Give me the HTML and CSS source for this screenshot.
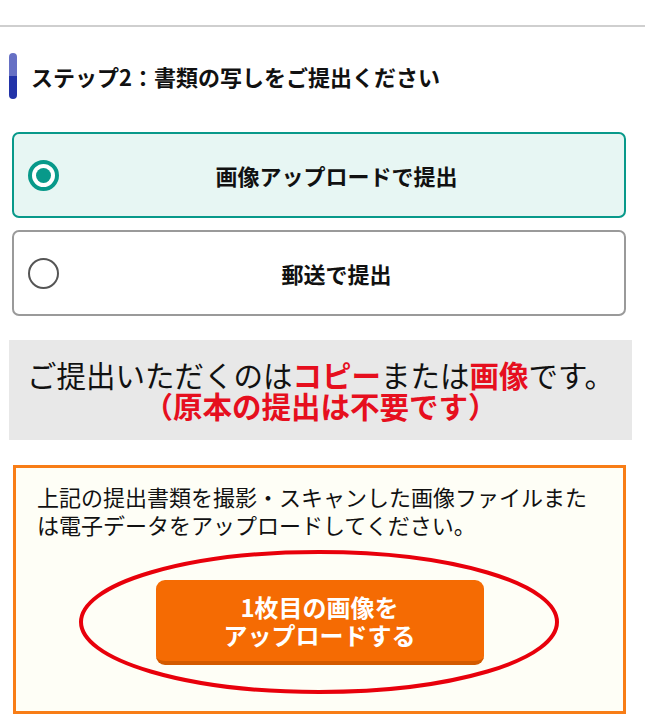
FILE: index.html
```html
<!DOCTYPE html>
<html lang="ja">
    <head>
        <meta charset="UTF-8" />
        <meta name="viewport" content="width=device-width, initial-scale=1.0" />
        <title>書類の提出</title>
        <link rel="stylesheet" href="styles.css">
    </head>
    <body>
        <div class="topline"></div>

        <h2 class="step-title">
            <span class="step-bar"></span>
            <span>ステップ2：書類の写しをご提出ください</span>
        </h2>

        <div class="options">
            <label class="option selected">
                <span class="radio"></span>
                <span class="option-text">画像アップロードで提出</span>
            </label>
            <label class="option">
                <span class="radio"></span>
                <span class="option-text">郵送で提出</span>
            </label>
        </div>

        <div class="notice">
            <p>ご提出いただくのは<b>コピー</b>または<b>画像</b>です。</p>
            <p class="notice-sub">（原本の提出は不要です）</p>
        </div>

        <div class="upload-box">
            <p class="upload-text">上記の提出書類を撮影・スキャンした画像ファイルまたは電子データをアップロードしてください。</p>
            <div class="upload-action">
                <button class="upload-btn">1枚目の画像を<br>アップロードする</button>
                <!-- 注目用の赤丸 -->
                <svg class="mark" width="484" height="148" viewBox="0 0 484 148">
                    <ellipse cx="242" cy="74" rx="238" ry="70" fill="none" stroke="#e8000b" stroke-width="4"/>
                </svg>
            </div>
        </div>
    </body>
</html>
```

FILE: styles.css
```css
body{
    margin: 0;
    background-color: #fff;
    font-family: "Noto Sans CJK JP", "Noto Sans", sans-serif;
    color: #111;
}
p{
    margin: 0;
}
.topline{
    margin-top: 25px;
    height: 2px;
    background-color: #cfcfcf;
}
.step-title{
    display: flex;
    align-items: center;
    margin: 26px 0 0 9px;
    font-size: 22px;
    font-weight: 700;
    line-height: 30px;
}
.step-bar{
    width: 8px;
    height: 46px;
    border-radius: 4px;
    margin-right: 14px;
    background: linear-gradient(#6670c4 50%, #2233a8 50%);
}

.options{
    margin: 33px 0 0 12px;
    width: 614px;
}
.option{
    display: flex;
    align-items: center;
    box-sizing: border-box;
    height: 86px;
    padding: 0 10px 0 14px;
    margin-bottom: 12px;
    border: 2px solid #9a9a9a;
    border-radius: 7px;
    background-color: #fff;
}
.option.selected{
    border-color: #08998a;
    background-color: #e7f6f3;
}
.radio{
    position: relative;
    box-sizing: border-box;
    width: 31px;
    height: 31px;
    border: 2px solid #555;
    border-radius: 50%;
    background-color: #fff;
}
.selected .radio{
    border: 4px solid #08998a;
}
.selected .radio::after{
    content: "";
    position: absolute;
    left: 4px;
    top: 4px;
    width: 15px;
    height: 15px;
    border-radius: 50%;
    background-color: #08998a;
}
.option-text{
    flex: 1;
    text-align: center;
    font-size: 22px;
    font-weight: 700;
}

.notice{
    margin: 24px 0 0 9px;
    width: 623px;
    padding: 19px 0;
    background-color: #e8e8e8;
    text-align: center;
    font-size: 29.5px;
    line-height: 31px;
}
.notice b,
.notice-sub{
    color: #e60f1e;
    font-weight: 700;
}

.upload-box{
    margin: 25px 0 0 13px;
    width: 613px;
    box-sizing: border-box;
    padding: 14px 18px 46px 21px;
    border: 3px solid #f87d16;
    background-color: #fefef6;
}
.upload-text{
    font-size: 22px;
    line-height: 28px;
}
.upload-action{
    position: relative;
    display: flex;
    justify-content: center;
    margin-top: 42px;
}
.upload-btn{
    width: 328px;
    height: 85px;
    border: none;
    border-radius: 9px;
    border-bottom: 4px solid #d35a00;
    background-color: #f56b03;
    color: #fff;
    font-family: inherit;
    font-size: 24px;
    font-weight: 700;
    line-height: 28px;
    margin-left: -3px;
}
.mark{
    position: absolute;
    left: 40px;
    top: -32px;
}
```
